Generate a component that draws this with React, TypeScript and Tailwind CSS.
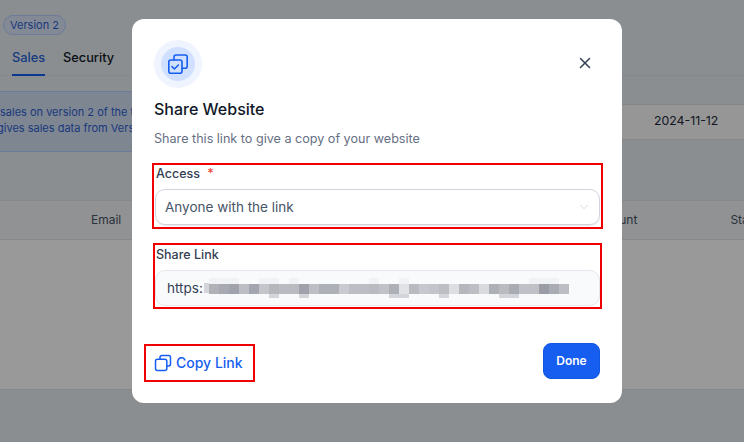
import { ChevronDown, X } from "lucide-react";

const mosaic = [
  "#b0b2b8", "#a8aab2", "#a0a3ac", "#bcbec4", "#a3a6ae", "#c3c5ca", "#b5b7bd", "#b9bbc1", "#b9bbc1",
  "#9fa2aa", "#bcbec4", "#aeb0b7", "#aeb0b7", "#c8cacf", "#bcbec4", "#bcbec4", "#b9bbc1", "#c0c2c7",
  "#adb0b6", "#e0e2e6", "#b9bbc1", "#c6c8cd", "#c3c5cb", "#bcbec4", "#dcdee2", "#b5b7bd", "#bcbec4",
  "#d8dade", "#aeb0b7", "#b9bbc1", "#a9acb3", "#bfc1c6", "#bfc1c6", "#9b9da6", "#a9acb3", "#bcbec4",
];
const fringeTop = [0, 1, 2, 5, 6, 8, 16, 19, 32, 33, 34];
const fringeBottom = [6, 9, 18, 19, 23, 29, 30];

const App = () => {
  return (
    <div className="relative h-[442px] w-[744px] overflow-hidden bg-[#e8edf2] font-['Inter',sans-serif]">
      {/* page behind the dialog */}
      <div className="pt-[15px]">
        <div className="ml-[3px] w-[63px] rounded-full border border-[#b2ccff] bg-[#dbe6fb] text-center text-[11px] leading-[18px] text-[#2d5fd0]">
          Version 2
        </div>
        <div className="mt-[10px] flex h-[31px] gap-[18px] border-b border-[#dfe3e8] pl-[12px] text-[12.8px]">
          <div className="h-[31px] w-[33px] border-b-2 border-[#155eef] pt-[3px] font-medium text-[#2563d8]">Sales</div>
          <div className="pt-[3px] font-medium text-[#101828]">Security</div>
        </div>
        <div className="mt-[15px] flex h-[61px] items-center justify-between">
          <div className="h-[61px] w-[400px] overflow-hidden border-y border-[#b2ccff] bg-[#d3e0f3] pt-[12px] text-[11px] leading-4 text-[#2d5fd0]">
            <div className="whitespace-nowrap">sales on version 2 of the token</div>
            <div className="-ml-[3px] whitespace-nowrap">gives sales data from Version 1</div>
          </div>
          <div className="flex h-[36px] w-[200px] items-center border-y border-[#dde0e4] bg-[#fafafa] pl-[110px] text-[12.3px] text-[#1d2939]">
            2024-11-12
          </div>
        </div>
        <div className="mt-[48px] flex h-[40px] items-center overflow-hidden border-y border-[#dfe3e8] bg-[#f2f4f6] text-xs whitespace-nowrap text-[#475467]">
          <span className="ml-[91px]">Email</span>
          <span className="ml-[472px]">Amount</span>
          <span className="ml-[93px]">Status</span>
        </div>
        <div className="h-[150px] border-b border-[#dfe3e8] bg-white" />
      </div>

      {/* dialog */}
      <div className="absolute inset-0 flex items-start justify-center bg-black/40 pt-[19px] pl-[10px]">
        <div className="h-[384px] w-[490px] rounded-xl bg-white px-[22px] pt-[21px]">
          <div className="flex items-start justify-between">
            <div className="flex h-12 w-12 items-center justify-center rounded-full bg-[#eff4ff]">
              <div className="flex h-[34px] w-[34px] items-center justify-center rounded-full bg-[#d1e0ff]">
                <svg width="20" height="20" viewBox="0 0 20 20" fill="none" stroke="#155eef" strokeWidth="1.6" strokeLinejoin="round" strokeLinecap="round">
                  <path d="M6 6V3a2 2 0 0 1 2-2h9.2a2 2 0 0 1 2 2v9.2a2 2 0 0 1-2 2H14" />
                  <rect x="0.8" y="6" width="13.2" height="13.2" rx="2" />
                  <path d="M4 12.6l2.4 2.4 4-4" />
                </svg>
              </div>
            </div>
            <X className="mt-[14px] mr-[6px] h-[18px] w-[18px] text-[#344054]" strokeWidth={2} />
          </div>
          <h2 className="mt-[11px] text-base leading-5 font-medium text-[#101828]">Share Website</h2>
          <p className="mt-[11px] text-[12.6px] leading-[18px] text-[#667085]">Share this link to give a copy of your website</p>

          <div className="-mx-[2px] mt-[15px] h-[66px] w-[451px] border-2 border-[#f00000] pl-[1px]">
            <div className="h-[18px] pt-[1px] pl-[1px] text-[12.5px] leading-[16px] font-medium text-[#344054]">
              Access <span className="ml-[4px] text-[#f04438]">*</span>
            </div>
            <div className="mt-[6px] flex h-[36px] w-[445px] items-center justify-between rounded-[10px] border border-[#d0d5dd] pr-[8px] pl-[9px] text-[13.5px] text-[#475467] shadow-[0_1px_1px_rgba(16,24,40,0.1)]">
              Anyone with the link
              <ChevronDown className="h-[14px] w-[14px] text-[#d0d5dd]" strokeWidth={1.5} />
            </div>
          </div>

          <div className="-ml-[1px] mt-[14px] h-[66px] w-[449px] border-2 border-[#f00000]">
            <div className="h-[20px] pt-[2px] pl-[1px] text-[12.5px] leading-[16px] font-medium text-[#344054]">Share Link</div>
            <div className="mt-[5px] flex h-[36px] w-[445px] items-center rounded-[10px] border border-[#e4e7ec] bg-[#f9fafb] pl-[11px] text-[13.5px] text-[#344054]">
              https:
              <div className="ml-[1px] h-[10px] w-[5px] bg-[#d4d5da]" />
              <div className="flex h-[20px]">
                {mosaic.map((color, i) => (
                  <div key={i} className="flex h-full w-[10px] flex-col">
                    <div className={fringeTop.includes(i) ? "h-[6px] bg-[#f1f2f5]" : "h-[6px]"} />
                    <div className="h-[10px]" style={{ backgroundColor: color }} />
                    <div className={fringeBottom.includes(i) ? "h-[4px] bg-[#d3d5da]" : "h-[4px]"} />
                  </div>
                ))}
              </div>
            </div>
          </div>

          <div className="mt-[34px] flex items-center justify-between">
            <div className="-ml-[10px] flex h-[38px] w-[111px] items-center gap-[4px] border-2 border-[#f00000] pl-[8px] text-sm font-medium text-[#155eef]">
              <svg width="18" height="18" viewBox="0 0 18 18" fill="none" stroke="#155eef" strokeWidth="1.5" strokeLinejoin="round">
                <path d="M6 5.2V3.4A1.9 1.9 0 0 1 7.9 1.5h6.7a1.9 1.9 0 0 1 1.9 1.9v6.7a1.9 1.9 0 0 1-1.9 1.9h-1.8" />
                <rect x="1.5" y="5.2" width="11.3" height="11.3" rx="2" />
              </svg>
              Copy Link
            </div>
            <button type="button" className="mb-[4px] h-9 w-[57px] rounded-lg border border-[#0f56e0] bg-[#155eef] text-xs font-semibold text-white">
              Done
            </button>
          </div>
        </div>
      </div>
    </div>
  );
};

export default App;
